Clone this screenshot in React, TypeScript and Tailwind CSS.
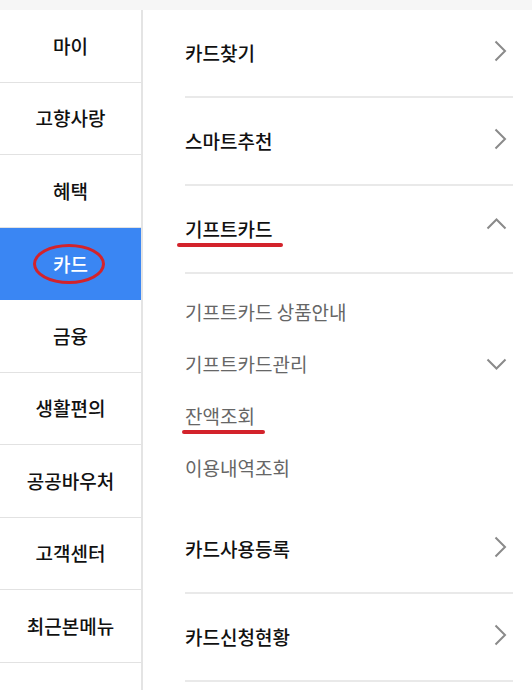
const font = { fontFamily: '"Noto Sans CJK KR", "Noto Sans", sans-serif' };

const sideItems = ['마이', '고향사랑', '혜택', '카드', '금융', '생활편의', '공공바우처', '고객센터', '최근본메뉴'];

const giftSub = ['기프트카드 상품안내', '기프트카드관리', '잔액조회', '이용내역조회'];

function Chevron({ dir }: { dir: 'right' | 'up' | 'down' }) {
  if (dir === 'right') {
    return (
      <svg width="13" height="22" viewBox="0 0 13 22" className="mr-[6px] -mt-[4px]">
        <polyline points="1.5,1.5 11,11 1.5,20.5" fill="none" stroke="#8a8a8a" strokeWidth="2" />
      </svg>
    );
  }
  const pts = dir === 'up' ? '1.5,10.5 10.5,1.5 19.5,10.5' : '1.5,1.5 10.5,10.5 19.5,1.5';
  return (
    <svg width="21" height="12" viewBox="0 0 21 12" className={dir === 'up' ? 'mr-[6px] -mt-[10px]' : 'mr-[6px]'}>
      <polyline points={pts} fill="none" stroke="#8a8a8a" strokeWidth="2" />
    </svg>
  );
}

function MainRow({ label }: { label: string }) {
  return (
    <div className="h-[88px] flex items-center justify-between border-b-2 border-[#e9e9e9]">
      <span className="text-[19px] font-medium text-[#111]">{label}</span>
      <Chevron dir="right" />
    </div>
  );
}

export default function App() {
  return (
    <div className="w-[532px] h-[690px] bg-white overflow-hidden" style={font}>
      <div className="h-[10px] bg-[#f6f6f6]" />
      <div className="flex h-[680px]">
        {/* sidebar */}
        <div className="w-[143px] shrink-0 border-r-2 border-[#e4e4e4]">
          {sideItems.map(item =>
            item === '카드' ? (
              <div key={item} className="h-[72.5px] bg-[#3a86f3] flex items-center justify-center relative">
                <span className="text-[19px] font-medium text-white">{item}</span>
                <span className="absolute left-[33px] top-[16px] w-[72px] h-[40px] rounded-[50%] border-[3px] border-[#d3232b]" />
              </div>
            ) : (
              <div key={item} className="h-[72.5px] flex items-center justify-center border-b border-[#e2e2e2]">
                <span className="text-[19px] font-medium text-[#111]">{item}</span>
              </div>
            )
          )}
        </div>

        {/* content */}
        <div className="flex-1 pl-[42px] pr-[19px]">
          <MainRow label="카드찾기" />
          <MainRow label="스마트추천" />
          <div className="h-[88px] flex items-center justify-between border-b-2 border-[#e9e9e9]">
            <span className="relative text-[19px] font-medium text-[#111]">
              기프트카드
              <span className="absolute -left-[8px] top-[28px] w-[106px] h-[4px] rounded-full bg-[#d3232b]" />
            </span>
            <Chevron dir="up" />
          </div>
          <div className="py-[12px]">
            {giftSub.map(s => (
              <div key={s} className="h-[52px] flex items-center justify-between">
                <span className="relative text-[19px] text-[#666]">
                  {s}
                  {s === '잔액조회' && (
                    <span className="absolute -left-[3px] top-[28px] w-[83px] h-[4px] rounded-full bg-[#d3232b]" />
                  )}
                </span>
                {s === '기프트카드관리' && <Chevron dir="down" />}
              </div>
            ))}
          </div>
          <MainRow label="카드사용등록" />
          <MainRow label="카드신청현황" />
        </div>
      </div>
    </div>
  );
}
